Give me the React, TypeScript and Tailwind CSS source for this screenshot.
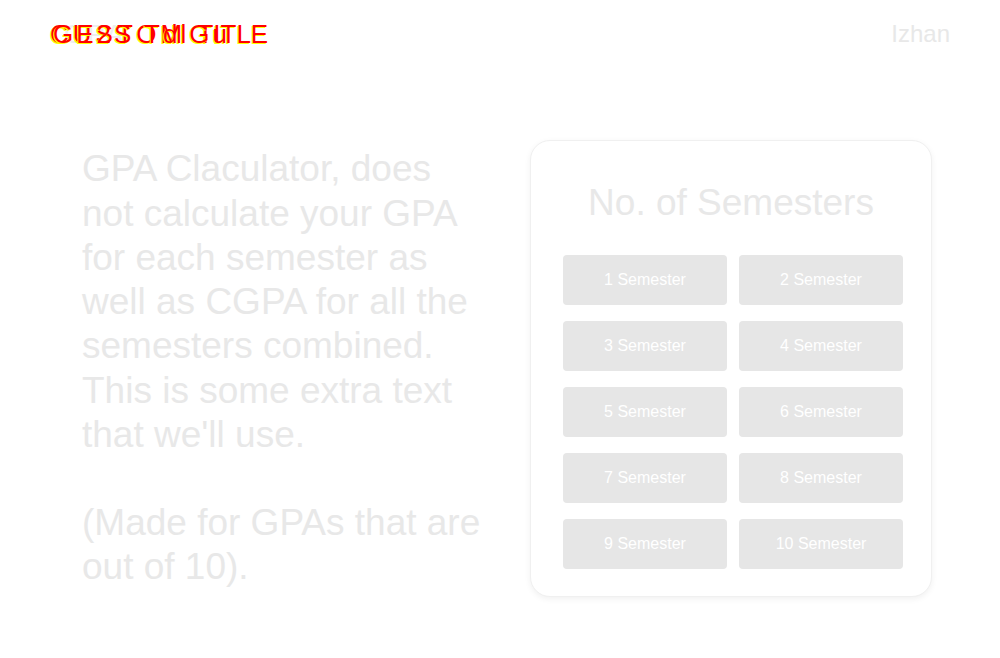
import React from 'react';

const semesters = [1, 2, 3, 4, 5, 6, 7, 8, 9, 10];

// glitchy overlapped logo
const Logo: React.FC = () => {
  return (
    <div className="relative h-[30px] w-[230px] text-[26px] leading-[30px] select-none">
      <span className="absolute left-[14px] top-0 whitespace-nowrap tracking-[3px] text-[#eeeeee]">GPA</span>
      <span className="absolute left-0 top-0 whitespace-nowrap text-[#ff0000] [text-shadow:-1px_1px_0_#ffff00]">
        <span className="tracking-[4px]">CUSTOM </span>TITLE
      </span>
      <span className="absolute left-[3px] top-0 whitespace-nowrap tracking-[3px] text-[#ff0000] [text-shadow:-1px_1px_0_#ffff00]">
        GE2S TdlGu
      </span>
    </div>
  );
};

const SemesterCard: React.FC = () => {
  return (
    <div className="w-[402px] rounded-[20px] border border-[#f0f0f0] bg-white px-[32px] pt-[40px] pb-[27px] shadow-[0_2px_6px_rgba(0,0,0,0.06)]">
      <h2 className="text-center text-[37px] leading-[44px] font-normal text-[#e8e8e8]">No. of Semesters</h2>
      <div className="mt-[30px] grid grid-cols-[164px_164px] gap-x-3 gap-y-4">
        {semesters.map((n) => (
          <button
            key={n}
            className="h-[50px] rounded-[4px] bg-[#e6e6e6] text-[16px] text-white"
          >
            {n} Semester
          </button>
        ))}
      </div>
    </div>
  );
};

export default function App() {
  return (
    <div className="min-h-[658px] w-full bg-white font-['Liberation_Sans',Arial,sans-serif]">
      <header className="flex h-[68px] items-center justify-between px-[50px]">
        <Logo />
        <span className="text-[24px] text-[#e8e8e8]">Izhan</span>
      </header>
      <main className="flex items-center pt-[72px] pl-[82px]">
        <p className="w-[405px] text-[37px] leading-[44.2px] text-[#e8e8e8]">
          GPA Claculator, does not calculate your GPA for each semester as well as CGPA for all the semesters combined.
          This is some extra text that we'll use.
          <br />
          <br />
          (Made for GPAs that are out of 10).
        </p>
        <div className="ml-[43px]">
          <SemesterCard />
        </div>
      </main>
    </div>
  );
}
